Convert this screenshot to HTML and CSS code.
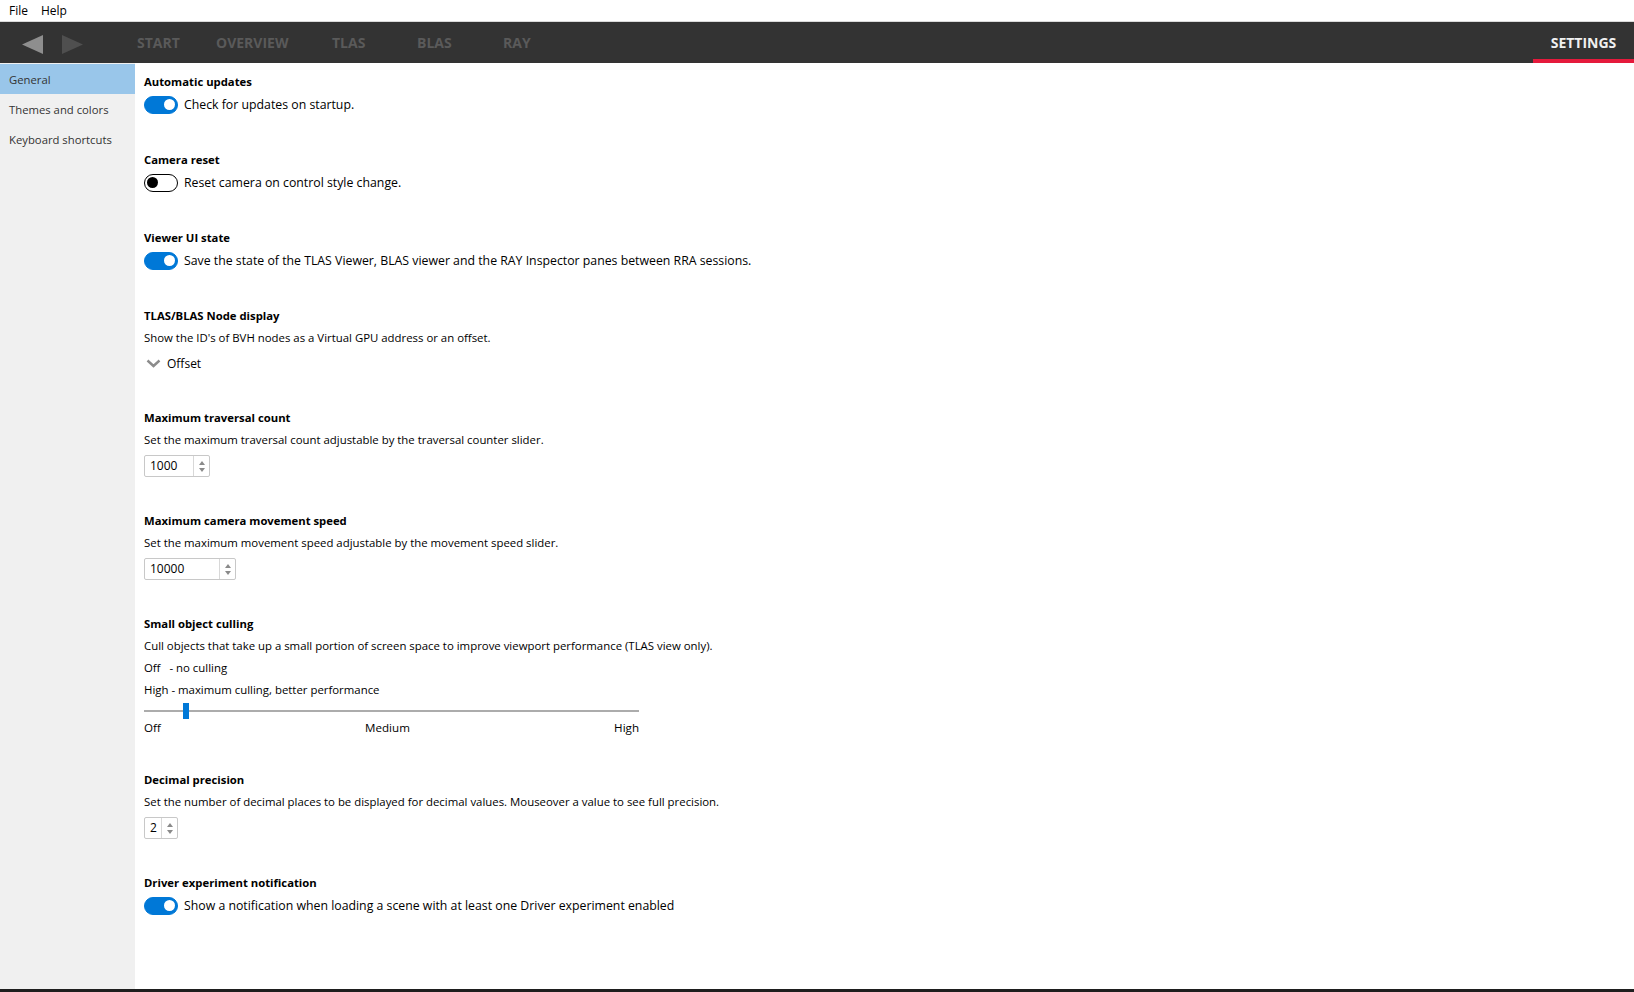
FILE: index.html
```html
<!DOCTYPE html>
<html lang="en">
<head>
    <meta charset="UTF-8">
    <title>Settings</title>
    <link rel="stylesheet" href="styles.css">
</head>
<body>
    <div class="menubar">
        <span>File</span>
        <span>Help</span>
    </div>
    <div class="toolbar">
        <div class="arrows">
            <svg class="arrow back" width="21" height="19" viewBox="0 0 21 19"><polygon points="21,0 21,19 0,9.5"/></svg>
            <svg class="arrow fwd" width="21" height="19" viewBox="0 0 21 19"><polygon points="0,0 0,19 21,9.5"/></svg>
        </div>
        <div class="tabs">
            <span>START</span>
            <span>OVERVIEW</span>
            <span>TLAS</span>
            <span>BLAS</span>
            <span>RAY</span>
        </div>
        <div class="tab-settings">SETTINGS</div>
    </div>
    <div class="main">
        <div class="sidebar">
            <div class="side-item selected">General</div>
            <div class="side-item">Themes and colors</div>
            <div class="side-item">Keyboard shortcuts</div>
        </div>
        <div class="content">
            <div class="section">
                <div class="heading">Automatic updates</div>
                <div class="toggle-row"><span class="toggle on"></span>Check for updates on startup.</div>
            </div>
            <div class="section">
                <div class="heading">Camera reset</div>
                <div class="toggle-row"><span class="toggle"></span>Reset camera on control style change.</div>
            </div>
            <div class="section">
                <div class="heading">Viewer UI state</div>
                <div class="toggle-row"><span class="toggle on"></span>Save the state of the TLAS Viewer, BLAS viewer and the RAY Inspector panes between RRA sessions.</div>
            </div>
            <div class="section">
                <div class="heading">TLAS/BLAS Node display</div>
                <div class="line">Show the ID's of BVH nodes as a Virtual GPU address or an offset.</div>
                <div class="dropdown">
                    <svg width="15" height="9" viewBox="0 0 15 9"><polyline points="1.5,1.5 7.5,7 13.5,1.5" fill="none" stroke="#8c8c8c" stroke-width="2.4"/></svg>
                    <span>Offset</span>
                </div>
            </div>
            <div class="section">
                <div class="heading">Maximum traversal count</div>
                <div class="line">Set the maximum traversal count adjustable by the traversal counter slider.</div>
                <div class="spinbox w-1000"><span class="value">1000</span><span class="spin"><i class="up"></i><i class="down"></i></span></div>
            </div>
            <div class="section">
                <div class="heading">Maximum camera movement speed</div>
                <div class="line">Set the maximum movement speed adjustable by the movement speed slider.</div>
                <div class="spinbox w-10000"><span class="value">10000</span><span class="spin"><i class="up"></i><i class="down"></i></span></div>
            </div>
            <div class="section">
                <div class="heading">Small object culling</div>
                <div class="line">Cull objects that take up a small portion of screen space to improve viewport performance (TLAS view only).</div>
                <div class="line">Off &nbsp;&nbsp;- no culling</div>
                <div class="line">High - maximum culling, better performance</div>
                <div class="slider">
                    <div class="track"></div>
                    <div class="handle" style="left: 39px"></div>
                </div>
                <div class="slider-labels">
                    <span>Off</span>
                    <span>Medium</span>
                    <span>High</span>
                </div>
            </div>
            <div class="section">
                <div class="heading">Decimal precision</div>
                <div class="line">Set the number of decimal places to be displayed for decimal values. Mouseover a value to see full precision.</div>
                <div class="spinbox w-2"><span class="value">2</span><span class="spin"><i class="up"></i><i class="down"></i></span></div>
            </div>
            <div class="section">
                <div class="heading">Driver experiment notification</div>
                <div class="toggle-row"><span class="toggle on"></span>Show a notification when loading a scene with at least one Driver experiment enabled</div>
            </div>
        </div>
    </div>
</body>
</html>
```

FILE: styles.css
```css
html, body {
    height: 100%;
}
body {
    margin: 0;
    font-family: "Open Sans", "Noto Sans", sans-serif;
    font-size: 12px;
    color: #000;
    background: #fff;
    display: flex;
    flex-direction: column;
    overflow: hidden;
}
.menubar {
    height: 21px;
    border-bottom: 1px solid #dadada;
    display: flex;
    align-items: center;
    padding-left: 9px;
    gap: 13px;
}
.toolbar {
    height: 41px;
    background: #333333;
    display: flex;
    align-items: stretch;
}
.arrows {
    display: flex;
    align-items: center;
    padding: 3px 0 0 22px;
    gap: 19px;
}
.arrow.back {
    fill: #8e8e8e;
}
.arrow.fwd {
    fill: #4f4f4f;
}
.tabs {
    display: grid;
    grid-template-columns: 79px 116px 85px 86px auto;
    align-items: center;
    margin-left: 54px;
    font-size: 14px;
    font-weight: bold;
    color: #5a5a5a;
}
.tab-settings {
    margin-left: auto;
    width: 101px;
    box-sizing: border-box;
    border-bottom: 4px solid #e51a3c;
    padding-top: 4px;
    display: flex;
    align-items: center;
    justify-content: center;
    font-size: 14px;
    font-weight: bold;
    color: #f0f0f0;
}
.main {
    flex: 1;
    display: flex;
    border-bottom: 3px solid #1e1e1e;
}
.sidebar {
    width: 135px;
    background: #f0f0f0;
    padding-top: 1px;
    font-size: 11.3px;
}
.side-item {
    height: 30px;
    line-height: 31px;
    padding-left: 9px;
    color: #333;
}
.side-item.selected {
    background: #99c6ea;
}
.content {
    flex: 1;
    padding: 8px 0 0 9px;
    font-size: 12.3px;
}
.section {
    margin-bottom: 33px;
}
.heading {
    font-weight: bold;
    font-size: 11.3px;
    line-height: 22px;
}
.line {
    font-size: 11.4px;
    line-height: 22px;
}
.toggle-row {
    display: flex;
    align-items: center;
    height: 23px;
}
.toggle {
    width: 34px;
    height: 18px;
    box-sizing: border-box;
    border-radius: 9px;
    border: 1.5px solid #000;
    background: #fff;
    margin-right: 6px;
    display: flex;
    align-items: center;
    padding: 0 2px;
}
.toggle::after {
    content: "";
    width: 11px;
    height: 11px;
    border-radius: 50%;
    background: #000;
}
.toggle.on {
    background: #0078d7;
    border-color: #0078d7;
    justify-content: flex-end;
}
.toggle.on::after {
    background: #fff;
}
.dropdown {
    display: flex;
    align-items: center;
    height: 22px;
    margin-top: 3px;
    padding-left: 2px;
    gap: 6px;
    font-size: 12px;
}
.spinbox {
    margin-top: 4px;
    height: 22px;
    box-sizing: border-box;
    border: 1px solid #c8c8c8;
    border-radius: 2px;
    display: flex;
    font-size: 12px;
}
.spinbox .value {
    flex: 1;
    padding-left: 5px;
    line-height: 20px;
}
.spinbox .spin {
    width: 15px;
    border-left: 1px solid #d8d8d8;
    display: flex;
    flex-direction: column;
    align-items: center;
    justify-content: center;
    gap: 3px;
}
.spin i {
    width: 0;
    height: 0;
    border-left: 3px solid transparent;
    border-right: 3px solid transparent;
}
.spin .up {
    border-bottom: 4px solid #8a8a8a;
}
.spin .down {
    border-top: 4px solid #8a8a8a;
}
.w-1000 {
    width: 66px;
}
.w-10000 {
    width: 92px;
}
.w-2 {
    width: 34px;
}
.slider {
    position: relative;
    width: 495px;
    height: 19px;
}
.slider .track {
    position: absolute;
    left: 0;
    right: 0;
    top: 9px;
    height: 2px;
    background: #acacac;
}
.slider .handle {
    position: absolute;
    top: 2px;
    width: 6px;
    height: 16px;
    background: #0078d7;
}
.slider-labels {
    width: 495px;
    display: flex;
    justify-content: space-between;
    font-size: 11.6px;
    line-height: 16px;
}
```
